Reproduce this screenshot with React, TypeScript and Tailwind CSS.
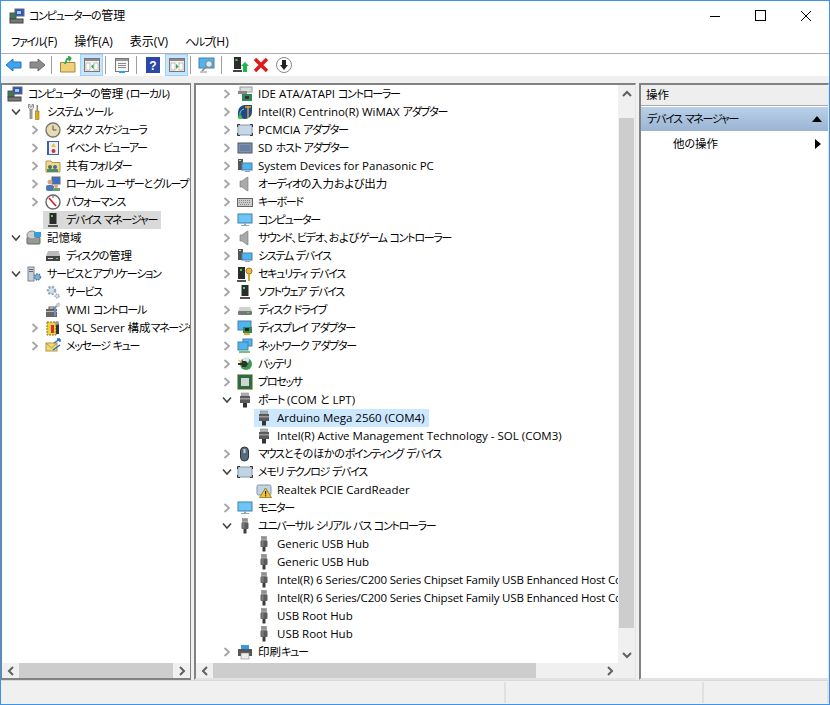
import React from "react";

type P = { children?: React.ReactNode };
const S = ({ children }: P) => (
  <svg width="16" height="16" viewBox="0 0 16 16" className="shrink-0">{children}</svg>
);
const T = ({ children }: P) => (
  <svg width="18" height="18" viewBox="0 0 18 18" className="shrink-0">{children}</svg>
);

// Kana in the reference's UI font are much narrower than in Noto: set them tighter than kanji and latin.
const Tx = ({ t }: { t: string }) => (
  <>
    {t.split(/([\u3040-\u30ff\u3001]+)/).map((p, i) =>
      i % 2 ? (
        <span key={i} className="text-[11px]">
          {p.split(/([\u3040-\u309f\u3001]+)/).map((q, j) =>
            j % 2 ? (
              <span key={j} className="tracking-[-0.2px]">{q}</span>
            ) : (
              <span key={j} className="tracking-[-1.3px]">{q}</span>
            )
          )}
        </span>
      ) : (
        <span key={i}>{p}</span>
      )
    )}
  </>
);

const ChevR = () => (
  <svg width="8" height="10" viewBox="0 0 8 10"><path d="M1.5 1 L6 5 L1.5 9" fill="none" stroke="#a6a6a6" strokeWidth="1.8" /></svg>
);
const ChevD = () => (
  <svg width="10" height="8" viewBox="0 0 10 8"><path d="M1 1.5 L5 6 L9 1.5" fill="none" stroke="#404040" strokeWidth="1.5" /></svg>
);

const Tower = () => (<>
  <rect x="4.5" y="1" width="7" height="11" fill="#2c2c2c" /><rect x="6" y="3" width="2" height="2" fill="#35e04a" />
  <rect x="3" y="13" width="10" height="2" fill="#555" />
</>);
const Mon = ({ x = 1, y = 2, w = 14, h = 9 }: { x?: number; y?: number; w?: number; h?: number }) => (<>
  <rect x={x} y={y} width={w} height={h} fill="#6cc6f6" stroke="#3f7ea8" strokeWidth="1" />
  <rect x={x + w / 2 - 1} y={y + h + 0.5} width="2" height="1.5" fill="#8aa8bd" />
  <rect x={x + w / 2 - 4} y={y + h + 2} width="8" height="1" fill="#8aa8bd" />
</>);
const Usb = () => (<>
  <rect x="5.5" y="0.5" width="5" height="4" fill="#a8a8a8" stroke="#777" strokeWidth=".5" />
  <rect x="6.5" y="1.5" width="1" height="1" fill="#444" /><rect x="8.5" y="1.5" width="1" height="1" fill="#444" />
  <rect x="4.5" y="4.5" width="7" height="6.5" rx="1" fill="#5c5c5c" /><rect x="5.5" y="5" width="2" height="5.5" fill="#7c7c7c" />
  <rect x="6.5" y="11" width="3" height="4.5" fill="#3c3c3c" />
</>);
const Port = () => (<>
  <rect x="4.5" y="1" width="7" height="3" fill="#b4b4b4" stroke="#777" strokeWidth=".5" />
  <rect x="3" y="4" width="10" height="7" fill="#5a5a5a" /><rect x="3" y="6" width="10" height="1.5" fill="#9a9a9a" />
  <rect x="6" y="11" width="4" height="4.5" fill="#333" />
</>);
const Card = ({ c = "#c6d8e6" }: { c?: string }) => (<>
  <rect x="1" y="3" width="14" height="10" rx="1.5" fill={c} stroke="#8798a8" strokeWidth="1" />
  <path d="M0.5 5 V2.5 H3 M13 2.5 H15.5 V5 M15.5 11 V13.5 H13 M3 13.5 H0.5 V11" fill="none" stroke="#333" strokeWidth="1" />
</>);
const Speaker = () => (<path d="M9 2 L11 1 L11 15 L9 14 L5 11 L3 11 L3 5 L5 5 Z" fill="#a9a9a9" stroke="#777" strokeWidth=".6" />);
const SysDev = () => (<>
  <rect x="1" y="1" width="5" height="11" fill="#555" /><rect x="2" y="2" width="2" height="1" fill="#9f9" />
  <rect x="5" y="5" width="10" height="7" fill="#4fb4f0" stroke="#4a7fa5" />
  <rect x="8" y="13" width="5" height="1" fill="#8aa8bd" />
</>);
const RootIcon = () => (
  <S><rect x="6" y="1" width="9" height="7" fill="#2a58b8" stroke="#667" /><rect x="8" y="3" width="4" height="3" fill="#aac8f0" /><rect x="1" y="5" width="6" height="6" fill="#3c7a50" stroke="#556" /><rect x="1" y="11" width="13" height="4" fill="#777" stroke="#444" /></S>
);

const I: Record<string, React.ReactNode> = {
  root: <RootIcon />,
  tools: <S><path d="M5 4 L5 15" stroke="#999" strokeWidth="3" /><path d="M2.5 0.5 L2.5 4 L5 6 L7.5 4 L7.5 0.5 L6 0.5 L6 3 L4 3 L4 0.5 Z" fill="#eee" stroke="#777" strokeWidth=".8" /><rect x="9.5" y="7" width="3.5" height="8.5" fill="#e8a810" stroke="#7a5a00" strokeWidth=".5" /><rect x="10.5" y="1" width="1.5" height="6" fill="#888" /></S>,
  clock: <S><circle cx="8" cy="8" r="7" fill="#e8dcb0" stroke="#777" strokeWidth="1.4" /><path d="M8 3.5 L8 8 L11.5 8" fill="none" stroke="#555" /></S>,
  event: <S><rect x="2" y="1" width="12" height="14" fill="#3d62a8" /><rect x="4" y="2" width="9" height="12" fill="#eef" /><path d="M8.5 3 L11 7 L6 7 Z" fill="#f0c020" /><circle cx="8.5" cy="11" r="2" fill="#d03030" /></S>,
  share: <S><path d="M1 3 L6 3 L7 4.5 L15 4.5 L15 14 L1 14 Z" fill="#f0d890" stroke="#b09a50" /><circle cx="5" cy="9" r="2" fill="#4a7a4a" /><circle cx="10" cy="9" r="2" fill="#4a6aaa" /><rect x="2" y="11" width="11" height="3" fill="#558a68" /></S>,
  users: <S><rect x="7" y="1" width="8" height="7" fill="#3a70c8" stroke="#667" /><circle cx="5" cy="6" r="2.5" fill="#d8a878" /><rect x="1" y="9" width="8" height="6" rx="2" fill="#4a78b8" /><circle cx="11" cy="10" r="2" fill="#d8a878" /><rect x="8" y="12" width="7" height="3" fill="#6aa070" /></S>,
  perf: <S><circle cx="8" cy="8" r="7" fill="#fff" stroke="#666" strokeWidth="1.4" /><path d="M4 4 L11 12" stroke="#d02020" strokeWidth="1.6" /><path d="M8 2 L8 4" stroke="#555" /></S>,
  dev: <S><Tower /></S>,
  storage: <S><rect x="1" y="7" width="13" height="7" rx="1" fill="#999" stroke="#666" /><ellipse cx="6" cy="5" rx="5" ry="4" fill="#ccc" stroke="#888" /><rect x="8" y="2" width="7" height="5" fill="#2f9fe0" /><rect x="10" y="10" width="2" height="1" fill="#3d3" /></S>,
  disk: <S><path d="M3 3 L14 3 L15 8 L1 8 Z" fill="#bbb" /><rect x="1" y="8" width="14" height="5" fill="#444" /><rect x="11" y="10" width="2" height="1" fill="#3e3" /><rect x="3" y="10" width="5" height="1" fill="#ddd" /></S>,
  svcapp: <S><rect x="2" y="1" width="6" height="14" fill="#c8ced6" stroke="#7a8694" /><rect x="3" y="3" width="4" height="1" fill="#667" /><rect x="3" y="5" width="4" height="1" fill="#667" /><circle cx="11.5" cy="11" r="3" fill="#7fb0d8" stroke="#47769e" strokeDasharray="1.5 1" strokeWidth="1.4" /></S>,
  gear: <S><circle cx="6.5" cy="6.5" r="3.6" fill="#d6e0ea" stroke="#90a8c0" strokeWidth="2.4" strokeDasharray="2 1.4" /><circle cx="12" cy="12" r="2" fill="#dde" stroke="#9ab" strokeWidth="1.4" strokeDasharray="1.4 1" /></S>,
  wmi: <S><rect x="1" y="7" width="11" height="8" fill="#666" /><rect x="4" y="5" width="5" height="2" fill="none" stroke="#555" /><rect x="1" y="9" width="11" height="1" fill="#bbb" /><path d="M14 1 L10 6 L10 14" fill="none" stroke="#6a8fc0" strokeWidth="2" /><circle cx="13" cy="3" r="2" fill="#ccc" /></S>,
  sql: <S><rect x="2" y="2" width="9" height="13" fill="#f0d040" stroke="#887020" strokeDasharray="2 1" /><rect x="6" y="5" width="3" height="8" fill="#d03030" /><rect x="11" y="4" width="3" height="10" fill="#333" /><circle cx="12" cy="3" r="2" fill="#999" /></S>,
  mq: <S><rect x="1" y="5" width="11" height="8" fill="#f3d770" stroke="#b09a50" /><path d="M1 5 L6.5 10 L12 5" fill="none" stroke="#b09a50" /><path d="M9 5 L15 1 M15 1 L12 1 M15 1 L15 4" stroke="#2a70d0" strokeWidth="1.4" fill="none" /><path d="M8 12 L15 7" stroke="#2a70d0" strokeWidth="1.4" /></S>,
  ide: <S><rect x="3" y="1" width="12" height="5" fill="#ddd" stroke="#999" /><rect x="1" y="5" width="9" height="3" fill="#888" /><rect x="5" y="8" width="10" height="7" fill="#2f8a5a" /><rect x="8" y="10" width="4" height="3" fill="#333" /></S>,
  wimax: <S><path d="M1 14 L1 8 A7 7 0 0 1 8 1 L15 1 L15 8 A7 7 0 0 1 8 15 Z" fill="#1d4a8a" /><path d="M11 2 L11 14 M8 3 L14 3" stroke="#e8a820" strokeWidth="1.4" /><path d="M3 11 A5 5 0 0 1 7 5" fill="none" stroke="#8cc" /><circle cx="3" cy="13" r="2" fill="#3c3" /></S>,
  pcmcia: <S><Card /></S>,
  sd: <S><rect x="1" y="3" width="14" height="10" fill="#7c92b0" stroke="#556" /><rect x="3" y="5" width="10" height="6" fill="#6a80a0" /></S>,
  sys: <S><SysDev /></S>,
  audio: <S><Speaker /></S>,
  kb: <S><rect x="0.5" y="4.5" width="15" height="8" fill="#ccc" stroke="#666" /><path d="M2 6.5 H14 M2 8.5 H14 M3 10.5 H13" stroke="#888" strokeDasharray="1 1" /></S>,
  pc: <S><Mon /></S>,
  sec: <S><rect x="1" y="1" width="7" height="12" fill="#2c2c2c" /><rect x="3" y="3" width="2" height="2" fill="#35e04a" /><rect x="0" y="14" width="9" height="2" fill="#555" /><circle cx="12" cy="5" r="3" fill="#e8b840" stroke="#a07818" /><rect x="11" y="8" width="2" height="7" fill="#d8a830" /></S>,
  soft: <S><Tower /></S>,
  drive: <S><path d="M3 5 L13 5 L15 9 L1 9 Z" fill="#d0d0d0" /><rect x="1" y="9" width="14" height="4" rx="1" fill="#777" /><rect x="10" y="10" width="2" height="1" fill="#3e3" /></S>,
  disp: <S><rect x="1" y="1" width="13" height="9" fill="#4fb4f0" stroke="#4a7fa5" /><rect x="6" y="7" width="9" height="6" fill="#2f8a5a" /><rect x="8" y="8" width="4" height="3" fill="#222" /><rect x="7" y="13" width="6" height="2" fill="#e8b020" /></S>,
  net: <S><rect x="6" y="1" width="9" height="7" fill="#4fb4f0" stroke="#4a7fa5" /><rect x="1" y="4" width="10" height="8" fill="#4fb4f0" stroke="#4a7fa5" /><rect x="2" y="13" width="11" height="2" fill="#7cc07c" /></S>,
  bat: <S><circle cx="9" cy="8" r="6" fill="#3c9a50" /><circle cx="9" cy="4" r="3" fill="#d8e8f0" /><rect x="1" y="7" width="9" height="2" fill="#333" /><path d="M5 5 L9 5 L11 8 L9 11 L5 11 Z" fill="#333" /><path d="M1 4 L5 6" stroke="#e8b020" /></S>,
  cpu: <S><rect x="0.5" y="0.5" width="15" height="15" fill="#2f6a48" stroke="#c8a840" strokeDasharray="1 1" /><rect x="4" y="4" width="8" height="8" fill="#cfd6cf" /></S>,
  mouse: <S><rect x="3.5" y="1" width="8" height="14" rx="4" fill="#5a6a7e" stroke="#2c3440" /><rect x="6.5" y="3" width="2" height="4" fill="#c8d0dc" /></S>,
  mem: <S><Card c="#bfd4e4" /></S>,
  warn: <S><rect x="1" y="3" width="14" height="10" rx="1.5" fill="#bfd4e4" stroke="#8798a8" /><path d="M9.5 6 L15.5 15.5 L3.5 15.5 Z" fill="#f4c430" stroke="#806010" strokeWidth=".7" /><rect x="9" y="9" width="1.2" height="3.5" fill="#222" /><rect x="9" y="13.2" width="1.2" height="1.2" fill="#222" /></S>,
  usb: <S><Usb /></S>,
  print: <S><rect x="4" y="1" width="8" height="4" fill="#3a9ae0" /><rect x="1" y="5" width="14" height="7" fill="#555" /><rect x="4" y="9" width="8" height="6" fill="#eee" stroke="#888" strokeWidth=".6" /></S>,
  port: <S><Port /></S>,
};

type Row = { l: 0 | 1 | 2; e?: "r" | "d"; i: string; t: string; sel?: boolean };

const pad = ["pl-[4px]", "pl-[4px]", "pl-[23px]"];

const Node = ({ e }: { e?: "r" | "d" }) => (
  <span className="w-[19px] h-full flex items-center justify-center shrink-0">
    {e === "r" ? <ChevR /> : e === "d" ? <ChevD /> : null}
  </span>
);

const leftRows: Row[] = [
  { l: 0, i: "root", t: "コンピューターの管理 (ローカル)" },
  { l: 1, e: "d", i: "tools", t: "システム ツール" },
  { l: 2, e: "r", i: "clock", t: "タスク スケジューラ" },
  { l: 2, e: "r", i: "event", t: "イベント ビューアー" },
  { l: 2, e: "r", i: "share", t: "共有フォルダー" },
  { l: 2, e: "r", i: "users", t: "ローカル ユーザーとグループ" },
  { l: 2, e: "r", i: "perf", t: "パフォーマンス" },
  { l: 2, i: "dev", t: "デバイス マネージャー", sel: true },
  { l: 1, e: "d", i: "storage", t: "記憶域" },
  { l: 2, i: "disk", t: "ディスクの管理" },
  { l: 1, e: "d", i: "svcapp", t: "サービスとアプリケーション" },
  { l: 2, i: "gear", t: "サービス" },
  { l: 2, i: "wmi", t: "WMI コントロール" },
  { l: 2, e: "r", i: "sql", t: "SQL Server 構成マネージャー" },
  { l: 2, e: "r", i: "mq", t: "メッセージ キュー" },
];

type CRow = { c?: boolean; e?: "r" | "d"; i: string; t: string; sel?: boolean; tight?: boolean };
const centerRows: CRow[] = [
  { e: "r", i: "ide", t: "IDE ATA/ATAPI コントローラー" },
  { e: "r", i: "wimax", t: "Intel(R) Centrino(R) WiMAX アダプター" },
  { e: "r", i: "pcmcia", t: "PCMCIA アダプター" },
  { e: "r", i: "sd", t: "SD ホスト アダプター" },
  { e: "r", i: "sys", t: "System Devices for Panasonic PC" },
  { e: "r", i: "audio", t: "オーディオの入力および出力" },
  { e: "r", i: "kb", t: "キーボード" },
  { e: "r", i: "pc", t: "コンピューター" },
  { e: "r", i: "audio", t: "サウンド、ビデオ、およびゲーム コントローラー" },
  { e: "r", i: "sys", t: "システム デバイス" },
  { e: "r", i: "sec", t: "セキュリティ デバイス" },
  { e: "r", i: "soft", t: "ソフトウェア デバイス" },
  { e: "r", i: "drive", t: "ディスク ドライブ" },
  { e: "r", i: "disp", t: "ディスプレイ アダプター" },
  { e: "r", i: "net", t: "ネットワーク アダプター" },
  { e: "r", i: "bat", t: "バッテリ" },
  { e: "r", i: "cpu", t: "プロセッサ" },
  { e: "d", i: "port", t: "ポート (COM と LPT)" },
  { c: true, i: "port", t: "Arduino Mega 2560 (COM4)", sel: true },
  { c: true, i: "port", t: "Intel(R) Active Management Technology - SOL (COM3)" },
  { e: "r", i: "mouse", t: "マウスとそのほかのポインティング デバイス" },
  { e: "d", i: "mem", t: "メモリ テクノロジ デバイス" },
  { c: true, i: "warn", t: "Realtek PCIE CardReader" },
  { e: "r", i: "pc", t: "モニター" },
  { e: "d", i: "usb", t: "ユニバーサル シリアル バス コントローラー" },
  { c: true, i: "usb", t: "Generic USB Hub" },
  { c: true, i: "usb", t: "Generic USB Hub" },
  { c: true, i: "usb", tight: true, t: "Intel(R) 6 Series/C200 Series Chipset Family USB Enhanced Host Controller - 1C2D" },
  { c: true, i: "usb", tight: true, t: "Intel(R) 6 Series/C200 Series Chipset Family USB Enhanced Host Controller - 1C26" },
  { c: true, i: "usb", t: "USB Root Hub" },
  { c: true, i: "usb", t: "USB Root Hub" },
  { e: "r", i: "print", t: "印刷キュー" },
];

const ArrowBtn = ({ d }: { d: string }) => (
  <svg width="10" height="10" viewBox="0 0 10 10"><path d={d} fill="none" stroke="#606060" strokeWidth="2" /></svg>
);
const HBar = ({ thumb }: { thumb: string }) => (
  <div className="h-[15px] bg-[#f0f0f0] flex items-center shrink-0">
    <span className="w-[17px] flex justify-center shrink-0"><ArrowBtn d="M7 1 L3 5 L7 9" /></span>
    <div className="flex-1 h-full min-w-0"><div className={thumb}></div></div>
    <span className="w-[17px] flex justify-center shrink-0"><ArrowBtn d="M3 1 L7 5 L3 9" /></span>
  </div>
);

const Sep = () => <div className="w-px h-[18px] bg-[#a0a0a0] shrink-0" />;
const ToolHi = ({ children }: P) => (
  <div className="w-[23px] h-[22px] bg-[#cce4f7] border border-[#99d1ff] flex items-center justify-center shrink-0">{children}</div>
);
const PaneIcon = ({ right }: { right?: boolean }) => (
  <T>
    <rect x="1.5" y="2.5" width="15" height="13" fill="#f4f4f4" stroke="#777" />
    <rect x="2" y="3" width="14" height="2" fill="#8a8a8a" />
    <rect x="3" y="7" width="4" height="7" fill="#fff" stroke="#999" strokeWidth=".6" />
    <rect x="11" y="7" width="4" height="7" fill="#fff" stroke="#999" strokeWidth=".6" />
    <path d={right ? "M8 8 L8 13 L10.5 10.5 Z" : "M10.5 8 L10.5 13 L8 10.5 Z"} fill="#2aa84a" />
  </T>
);

export default function App() {
  return (
    <div className="w-[830px] h-[705px] bg-white border border-[#3c93e8] flex flex-col overflow-hidden text-[11.5px] text-black font-['Open_Sans','Noto_Sans_CJK_JP',sans-serif] [font-feature-settings:'palt']">
      <div className="h-[29px] flex items-center shrink-0">
        <span className="ml-[8px] flex"><RootIcon /></span>
        <span className="ml-[4px] leading-none text-[12px]"><Tx t="コンピューターの管理" /></span>
        <div className="ml-auto flex items-center">
          <svg width="12" height="12" viewBox="0 0 12 12"><path d="M1 6.5 H11" stroke="#000" /></svg>
          <svg width="12" height="12" viewBox="0 0 12 12" className="ml-[34px]"><rect x=".5" y=".5" width="10" height="10" fill="none" stroke="#000" /></svg>
          <svg width="12" height="12" viewBox="0 0 12 12" className="ml-[33px] mr-[17px]"><path d="M1 1 L11 11 M11 1 L1 11" stroke="#000" /></svg>
        </div>
      </div>
      <div className="h-[23px] flex items-center gap-[17px] pl-[10px] shrink-0 text-[12px]">
        <span><Tx t="ファイル(F)" /></span><span>操作(A)</span><span>表示(V)</span><span><Tx t="ヘルプ(H)" /></span>
      </div>
      <div className="h-px bg-[#aeaeb8] shrink-0" />
      <div className="h-[22px] flex items-center shrink-0 pl-[4px]">
        <svg width="18" height="14" viewBox="0 0 18 14"><path d="M1 7 L8 1 L8 4 L16 4 L16 10 L8 10 L8 13 Z" fill="#3fa4ec" stroke="#1c74c0" /></svg>
        <svg width="18" height="14" viewBox="0 0 18 14" className="ml-[5px]"><path d="M17 7 L10 1 L10 4 L2 4 L2 10 L10 10 L10 13 Z" fill="#8c8c8c" stroke="#6c6c6c" /></svg>
        <span className="ml-[5px]"><Sep /></span>
        <span className="ml-[7px] flex"><T><path d="M1.5 6.5 L16 6.5 L16 16 L1.5 16 Z" fill="#f0d078" stroke="#a8883a" /><path d="M6 8 L8 3 L12 2 M12 2 L9 0.5 M12 2 L10 5" fill="none" stroke="#2aa84a" strokeWidth="1.8" /></T></span>
        <span className="ml-[3px]"><ToolHi><PaneIcon /></ToolHi></span>
        <span className="ml-[2px]"><Sep /></span>
        <span className="ml-[7px] flex"><T><rect x="2.5" y="2.5" width="13" height="13" fill="#f4f4f4" stroke="#777" /><rect x="3" y="3" width="12" height="2" fill="#999" /><path d="M5 7.5 H13 M5 9.5 H13 M5 11.5 H13" stroke="#8a8a8a" /><rect x="6" y="15" width="6" height="2" fill="#29a0e8" /></T></span>
        <span className="ml-[5px]"><Sep /></span>
        <span className="ml-[7px] flex"><T><rect x="2" y="1" width="14" height="16" fill="#2b48a8" /><text x="9" y="13.5" textAnchor="middle" fontSize="12" fontWeight="700" fill="#fff" fontFamily="Liberation Sans">?</text></T></span>
        <span className="ml-[3px]"><ToolHi><PaneIcon right /></ToolHi></span>
        <span className="ml-[2px]"><Sep /></span>
        <span className="ml-[7px] flex"><T><rect x="1" y="2" width="15" height="10" fill="#4fb4f0" stroke="#4a7fa5" /><circle cx="11" cy="8" r="3.4" fill="#d8eaf6" stroke="#777" /><path d="M8.5 10.5 L4 15" stroke="#888" strokeWidth="1.6" /><path d="M2 16 H9" stroke="#888" /></T></span>
        <span className="ml-[5px]"><Sep /></span>
        <span className="ml-[10px] flex"><T><rect x="2" y="1" width="7" height="12" fill="#2c2c2c" /><rect x="3.5" y="3" width="2" height="2" fill="#35e04a" /><rect x="1" y="14" width="9" height="2" fill="#444" /><path d="M9 10 L13 6 L17 10 L15 10 L15 16 L11 16 L11 10 Z" fill="#1fb84a" /></T></span>
        <span className="ml-[2px] flex"><T><path d="M3 3 L15 15 M15 3 L3 15" stroke="#e01a1a" strokeWidth="3.4" /></T></span>
        <span className="ml-[5px] flex"><T><circle cx="9" cy="9" r="7.5" fill="#fff" stroke="#8a8a8a" /><path d="M7 4 H11 V9 H13 L9 14 L5 9 H7 Z" fill="#222" /></T></span>
      </div>
      <div className="h-[7px] bg-[#f0f0f0] shrink-0" />

      <div className="flex-1 min-h-0 flex bg-[#f0f0f0]">
        {/* left pane */}
        <div className="w-[190px] border-2 border-[#828282] border-r border-l-[1px] bg-white flex flex-col shrink-0">
          <div className="flex-1 min-h-0 overflow-hidden">
            {leftRows.map((r, k) => (
              <div key={k} className={`h-[18px] flex items-center whitespace-nowrap ${pad[r.l]}`}>
                {r.l > 0 && <Node e={r.e} />}
                <span className={`flex items-center h-full pl-[1px] ${r.sel ? "bg-[#d9d9d9] pl-[2px] -ml-[1px] pr-[4px]" : ""}`}>
                  <span className="w-[17px] flex">{I[r.i]}</span>
                  <span className="ml-[4px]"><Tx t={r.t} /></span>
                </span>
              </div>
            ))}
          </div>
          <HBar thumb="h-full w-full bg-[#cdcdcd]" />
        </div>

        {/* center pane */}
        <div className="ml-[3px] w-[442px] border-2 border-[#828282] border-r-[#e3e3e3] border-b-[#e3e3e3] border-r border-b-[2px] bg-white flex flex-col shrink-0">
          <div className="flex-1 min-h-0 flex">
            <div className="flex-1 min-w-0 overflow-hidden">
              {centerRows.map((r, k) => (
                <div key={k} className={`h-[18px] flex items-center whitespace-nowrap ${r.c ? "pl-[60px]" : "pl-[21px]"}`}>
                  {!r.c && <Node e={r.e} />}
                  <span className={`flex items-center h-full ${r.c ? "" : "ml-[1px]"} ${r.sel ? "bg-[#cce8ff] pl-[2px] pr-[4px] -ml-[2px]" : ""}`}>
                    <span className="w-[18px] flex">{I[r.i]}</span>
                    <span className={`ml-[3px] ${r.tight ? "tracking-[-0.17px]" : ""}`}><Tx t={r.t} /></span>
                  </span>
                </div>
              ))}
            </div>
            <div className="w-[17px] bg-[#f0f0f0] flex flex-col items-center shrink-0">
              <span className="h-[17px] flex items-center shrink-0"><ArrowBtn d="M1 7 L5 3 L9 7" /></span>
              <div className="w-[15px] h-[510px] mt-[16px] bg-[#cdcdcd]" />
              <span className="mt-auto h-[17px] flex items-center shrink-0"><ArrowBtn d="M1 3 L5 7 L9 3" /></span>
            </div>
          </div>
          <div className="flex">
            <div className="flex-1 min-w-0"><HBar thumb="h-full w-[323px] bg-[#cdcdcd]" /></div>
            <div className="w-[17px] h-[15px] bg-[#f0f0f0]" />
          </div>
        </div>

        {/* right pane */}
        <div className="ml-[3px] flex-1 border-2 border-[#828282] border-r-[#e3e3e3] border-b-[#e3e3e3] border-r border-b-[2px] bg-white flex flex-col min-w-0">
          <div className="h-[20px] bg-[#eeeeee] flex items-center pl-[5px] shrink-0">操作</div>
          <div className="h-px bg-[#a8a8a8] shrink-0" />
          <div className="h-[24px] mt-px bg-gradient-to-b from-[#b9d0ea] to-[#9bb4d2] flex items-center pl-[6px] pr-[6px] justify-between shrink-0">
            <span><Tx t="デバイス マネージャー" /></span>
            <svg width="10" height="6" viewBox="0 0 10 6"><path d="M0 6 L5 0 L10 6 Z" fill="#000" /></svg>
          </div>
          <div className="h-[25px] flex items-center pl-[32px] pr-[7px] justify-between shrink-0">
            <span><Tx t="他の操作" /></span>
            <svg width="6" height="10" viewBox="0 0 6 10"><path d="M0 0 L6 5 L0 10 Z" fill="#000" /></svg>
          </div>
        </div>
      </div>

      <div className="h-[24px] bg-[#f0f0f0] border-t border-[#d9d9d9] flex justify-end shrink-0">
        <div className="w-[198px] border-l-2 border-[#e0e0e0] my-[1px]" />
        <div className="w-[127px] border-l-2 border-r-2 border-[#e0e0e0] my-[1px]" />
      </div>
    </div>
  );
}
